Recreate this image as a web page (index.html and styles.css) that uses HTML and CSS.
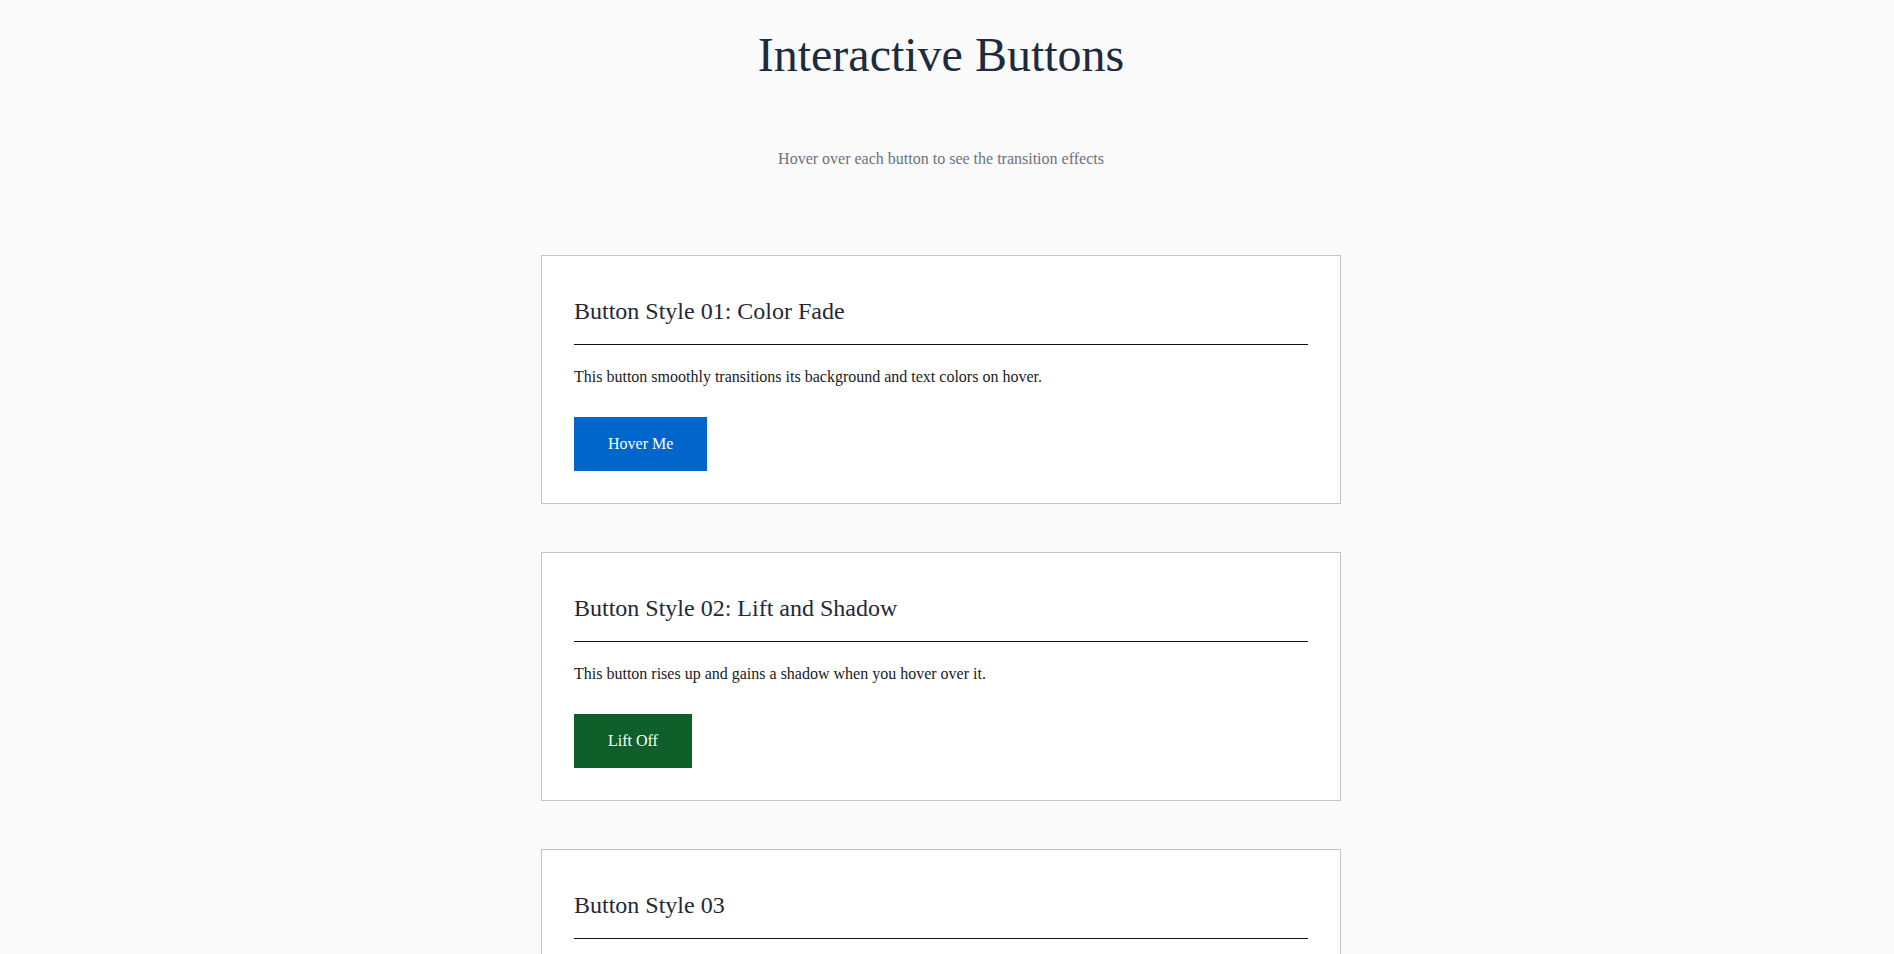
FILE: index.html
```html
<!DOCTYPE html>
<html lang="en">
<head>
  <meta charset="UTF-8" />
  <meta name="viewport" content="width=device-width, initial-scale=1" />
  <title>Interactive Buttons</title>
  <link rel="stylesheet" href="styles.css">
</head>
<body>

  <header class="page-header">
    <h1>Interactive Buttons</h1>
    <p class="subtitle">Hover over each button to see the transition effects</p>
  </header>

  <main class="demo-list">
    <!-- Style 01 -->
    <section class="demo-card">
      <h2>Button Style 01: Color Fade</h2>
      <p>This button smoothly transitions its background and text colors on hover.</p>
      <button class="btn btn-fade">Hover Me</button>
    </section>

    <!-- Style 02 -->
    <section class="demo-card">
      <h2>Button Style 02: Lift and Shadow</h2>
      <p>This button rises up and gains a shadow when you hover over it.</p>
      <button class="btn btn-lift">Lift Off</button>
    </section>

    <!-- Style 03 -->
    <section class="demo-card">
      <h2>Button Style 03</h2>
      <p>This button slides a new fill colour in from the left on hover.</p>
      <button class="btn btn-slide">Slide In</button>
    </section>
  </main>

</body>
</html>
```

FILE: styles.css
```css
body {
  font-family: "Liberation Serif", "Times New Roman", serif;
  background: #fafafa;
  color: #1f2937;
  margin: 0;
  padding: 0 12px 60px 0;
}

.page-header {
  text-align: center;
  padding-top: 27px;
}

.page-header h1 {
  font-size: 48px;
  font-weight: normal;
  line-height: 55px;
  color: #1c2b3d;
  margin: 0;
}

.subtitle {
  font-size: 16px;
  line-height: 18px;
  color: #6b7280;
  margin: 68px 0 0;
}

.demo-list {
  display: flex;
  flex-direction: column;
  align-items: center;
  gap: 48px;
  margin-top: 87px;
}

.demo-card {
  box-sizing: border-box;
  width: 800px;
  background: white;
  border: 1px solid #c4c4c4;
  padding: 32px;
}

.demo-card h2 {
  font-size: 24px;
  font-weight: normal;
  line-height: 29px;
  margin: 9px 0 0;
  padding-bottom: 18px;
  border-bottom: 1px solid #111;
  color: #1f2937;
}

.demo-card p {
  font-size: 16px;
  line-height: 18px;
  margin: 23px 0 31px;
  color: #1a1a1a;
}

.btn {
  font-family: inherit;
  font-size: 16px;
  line-height: 20px;
  padding: 16px 33px;
  border: 1px solid transparent;
  border-radius: 0;
  color: white;
  cursor: pointer;
  transition: all 0.3s ease;
}

.btn-fade {
  background: #0066cc;
  border-color: #0066cc;
}

.btn-fade:hover {
  background: white;
  color: #0066cc;
}

.btn-lift {
  background: #0e5f2a;
  border-color: #0e5f2a;
}

.btn-lift:hover {
  transform: translateY(-4px);
  box-shadow: 0 8px 16px rgba(0,0,0,0.2);
}

.btn-slide {
  background: #7a1f5c;
  border-color: #7a1f5c;
}
```
